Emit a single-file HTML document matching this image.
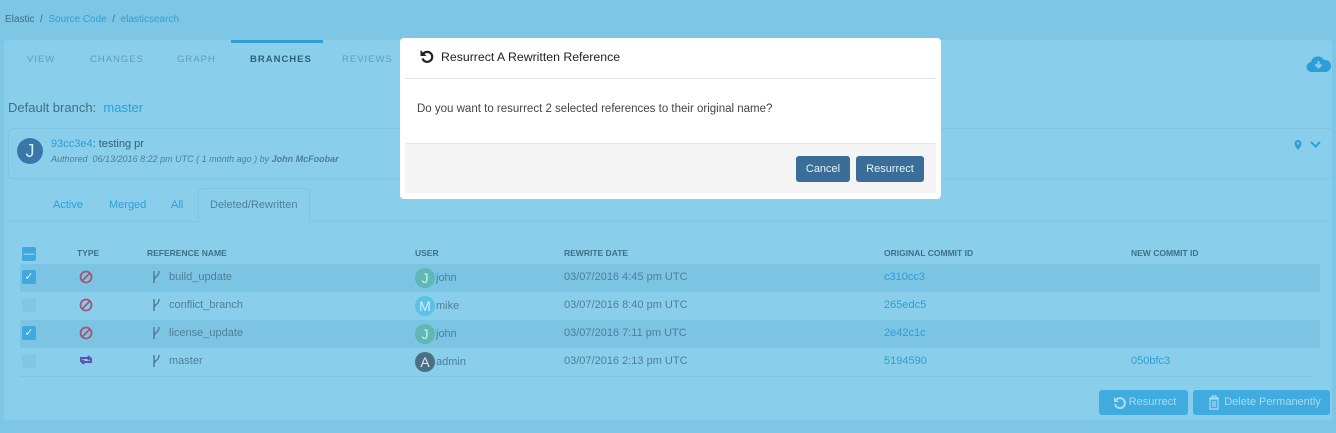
<!DOCTYPE html>
<html><head><meta charset="utf-8"><style>
*{box-sizing:border-box;margin:0;padding:0}
body{width:1336px;height:433px;overflow:hidden;background:#7ec6e5;font-family:"Liberation Sans",sans-serif;position:relative;color:#3f6f88}
.a{position:absolute}
.panel{left:4px;top:40px;width:1328px;height:380px;background:#89cfeb;border-radius:4px}
.tab{top:54px;font-size:9.5px;letter-spacing:1px;color:#5f9fba}
.th{top:248px;font-size:8.5px;font-weight:bold;color:#3f6f88}
.row{left:20px;width:1300px;height:28px}
.hl{background:#7cc4e3}
.cell{font-size:11px;color:#4f7f98}
.link{color:#2d9fd6 !important}
.cb{width:14px;height:14px;border-radius:2px;background:#80c7e6}
.cb.on{background:#3fa9df;color:#cfeefb;font-size:11px;line-height:14px;text-align:center}
.av{width:20px;height:20px;border-radius:50%;color:#cfeefb;font-size:14px;text-align:center;line-height:20px}
.btn{border-radius:3px;font-size:11px;text-align:center}
</style></head><body>
<div class="a" style="left:5px;top:14px;font-size:10px;color:#3f6f88">Elastic &nbsp;/&nbsp; <span class="link">Source Code</span> &nbsp;/&nbsp; <span class="link">elasticsearch</span></div>
<div class="a panel"></div>
<div class="a" style="left:231px;top:40px;width:92px;height:3px;background:#2d9fd6"></div>
<div class="a tab" style="left:27px">VIEW</div>
<div class="a tab" style="left:90px">CHANGES</div>
<div class="a tab" style="left:177px">GRAPH</div>
<div class="a tab" style="left:250px;color:#2f5f78;font-weight:bold">BRANCHES</div>
<div class="a tab" style="left:342px">REVIEWS</div>
<svg class="a" style="left:1306px;top:54px" width="25" height="20" viewBox="0 0 25 20"><path d="M6 18a5 5 0 0 1-1-10 7 7 0 0 1 13-2 5 5 0 0 1 2 12z" fill="#2d9fd6"/><path d="M12.5 7v6M9.5 10.5l3 3 3-3" stroke="#89cfeb" stroke-width="2" fill="none"/></svg>
<div class="a" style="left:8px;top:100px;font-size:13px;color:#3f6f88">Default branch: &nbsp;<span class="link">master</span></div>
<div class="a" style="left:8px;top:128px;width:1325px;height:51px;border:1px solid #80c6e4;border-radius:4px"></div>
<div class="a av" style="left:17px;top:138px;width:26px;height:26px;line-height:26px;font-size:18px;background:#3a76a8">J</div>
<div class="a" style="left:51px;top:138px;font-size:11px;color:#2f5f78"><span class="link">93cc3e4</span>: testing pr</div>
<div class="a" style="left:51px;top:154px;font-size:9px;font-style:italic;color:#4f7f98">Authored &nbsp;06/13/2016 8:22 pm UTC ( 1 month ago ) by <b>John McFoobar</b></div>
<svg class="a" style="left:1293px;top:139px" width="30" height="12"><path d="M5 1a3.5 3.5 0 0 0-3.5 3.5C1.5 7 5 11 5 11s3.5-4 3.5-6.5A3.5 3.5 0 0 0 5 1z" fill="#2d9fd6"/><circle cx="5" cy="4.5" r="1.2" fill="#89cfeb"/><path d="M18 3l4.5 4.5L27 3" stroke="#2d9fd6" stroke-width="2" fill="none"/></svg>
<div class="a" style="left:8px;top:221px;width:1325px;height:1px;background:#80c6e4"></div>
<div class="a" style="left:198px;top:188px;width:112px;height:34px;border:1px solid #80c6e4;border-bottom:none;border-radius:4px 4px 0 0;background:#89cfeb"></div>
<div class="a cell link" style="left:53px;top:199px">Active</div>
<div class="a cell link" style="left:109px;top:199px">Merged</div>
<div class="a cell link" style="left:171px;top:199px">All</div>
<div class="a cell" style="left:210px;top:199px">Deleted/Rewritten</div>
<div class="a cb on" style="left:22px;top:247px">—</div>
<div class="a th" style="left:77px">TYPE</div>
<div class="a th" style="left:147px">REFERENCE NAME</div>
<div class="a th" style="left:415px">USER</div>
<div class="a th" style="left:564px">REWRITE DATE</div>
<div class="a th" style="left:884px">ORIGINAL COMMIT ID</div>
<div class="a th" style="left:1131px">NEW COMMIT ID</div>
<div class="a row hl" style="top:264px"></div>
<div class="a row hl" style="top:320px"></div>
<div class="a" style="left:20px;top:376px;width:1292px;height:1px;background:#80c6e4"></div>
<div class="a cb on" style="left:22px;top:270px">✓</div>
<div class="a cb" style="left:22px;top:298px"></div>
<div class="a cb on" style="left:22px;top:326px">✓</div>
<div class="a cb" style="left:22px;top:354px"></div>
<svg class="a" style="left:79px;top:270px" width="16" height="100"><g stroke="#a65574" stroke-width="1.8" fill="none"><circle cx="7" cy="7" r="5.5"/><path d="M3 11l8-8"/><circle cx="7" cy="35" r="5.5"/><path d="M3 39l8-8"/><circle cx="7" cy="63" r="5.5"/><path d="M3 67l8-8"/></g><g stroke="#5a55b0" stroke-width="2" fill="none"><path d="M2 92v-4h9M9 86l2 2-2 2M12 88v4H3M5 94l-2-2 2-2"/></g></svg>
<svg class="a" style="left:151px;top:270px" width="10" height="100"><g stroke="#4f7f98" stroke-width="1.5" fill="none"><path d="M3 1v12M8 1c0 6-5 5-5 9"/><path d="M3 29v12M8 29c0 6-5 5-5 9"/><path d="M3 57v12M8 57c0 6-5 5-5 9"/><path d="M3 85v12M8 85c0 6-5 5-5 9"/></g></svg>
<div class="a cell" style="left:169px;top:271px">build_update</div>
<div class="a cell" style="left:169px;top:299px">conflict_branch</div>
<div class="a cell" style="left:169px;top:327px">license_update</div>
<div class="a cell" style="left:169px;top:355px">master</div>
<div class="a av" style="left:415px;top:268px;background:#5fb8b5">J</div><div class="a cell" style="left:436px;top:272px">john</div>
<div class="a av" style="left:415px;top:296px;background:#5cc2e5">M</div><div class="a cell" style="left:436px;top:300px">mike</div>
<div class="a av" style="left:415px;top:324px;background:#5fb8b5">J</div><div class="a cell" style="left:436px;top:328px">john</div>
<div class="a av" style="left:415px;top:352px;background:#4d6f85">A</div><div class="a cell" style="left:436px;top:356px">admin</div>
<div class="a cell" style="left:564px;top:271px">03/07/2016 4:45 pm UTC</div>
<div class="a cell" style="left:564px;top:299px">03/07/2016 8:40 pm UTC</div>
<div class="a cell" style="left:564px;top:327px">03/07/2016 7:11 pm UTC</div>
<div class="a cell" style="left:564px;top:355px">03/07/2016 2:13 pm UTC</div>
<div class="a cell link" style="left:884px;top:271px">c310cc3</div>
<div class="a cell link" style="left:884px;top:299px">265edc5</div>
<div class="a cell link" style="left:884px;top:327px">2e42c1c</div>
<div class="a cell link" style="left:884px;top:355px">5194590</div>
<div class="a cell link" style="left:1131px;top:355px">050bfc3</div>
<div class="a btn" style="left:1099px;top:390px;width:89px;height:25px;background:#3fabdf;color:#a7dcf3;line-height:25px;padding-left:18px">Resurrect</div>
<svg class="a" style="left:1113px;top:396px" width="14" height="14"><path d="M3 4a5 5 0 1 1-1 4" stroke="#a7dcf3" stroke-width="2" fill="none"/><path d="M1 1v5h5z" fill="#a7dcf3"/></svg>
<div class="a btn" style="left:1193px;top:390px;width:137px;height:25px;background:#3fabdf;color:#a7dcf3;line-height:25px;padding-left:22px">Delete Permanently</div>
<svg class="a" style="left:1208px;top:395px" width="12" height="15"><path d="M1 3h10M4 3V1h4v2M2 4h8v10H2z M5 6v6M7 6v6" stroke="#a7dcf3" stroke-width="1.2" fill="none"/></svg>
<div class="a" style="left:400px;top:38px;width:541px;height:161px;background:#fff;border-radius:4px"></div>
<div class="a" style="left:405px;top:78px;width:531px;height:1px;background:#dde3e6"></div>
<svg class="a" style="left:419px;top:48px" width="16" height="16"><path d="M4.5 5.5a5 5 0 1 1-1 5" stroke="#222" stroke-width="2.2" fill="none"/><path d="M1.5 2v6h6z" fill="#222"/></svg>
<div class="a" style="left:441px;top:50px;font-size:12.3px;color:#222">Resurrect A Rewritten Reference</div>
<div class="a" style="left:417px;top:103px;font-size:11.5px;color:#444">Do you want to resurrect 2 selected references to their original name?</div>
<div class="a" style="left:405px;top:143px;width:531px;height:50px;background:#f4f4f4;border-top:1px solid #e6e6e6"></div>
<div class="a btn" style="left:796px;top:156px;width:54px;height:26px;background:#3a6e99;color:#e8f4fb;line-height:26px">Cancel</div>
<div class="a btn" style="left:856px;top:156px;width:68px;height:26px;background:#3a6e99;color:#e8f4fb;line-height:26px">Resurrect</div>
</body></html>
